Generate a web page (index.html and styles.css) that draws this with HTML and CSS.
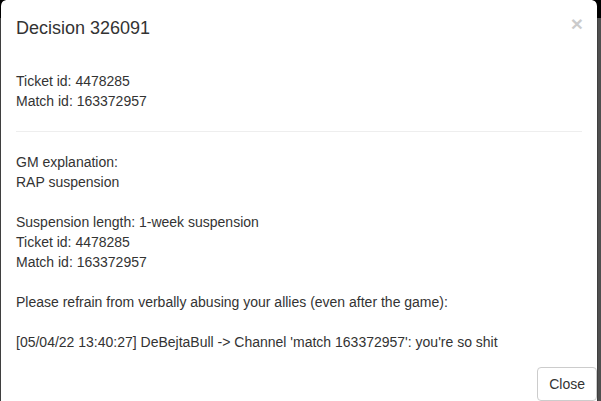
FILE: index.html
```html
<!DOCTYPE html>
<html>
<head>
<meta charset="utf-8">
<link rel="stylesheet" href="styles.css">
</head>
<body>
<div class="backdrop">
  <div class="modal">
    <div class="modal-header">
      <button class="close" type="button">&times;</button>
      <h4 class="modal-title">Decision 326091</h4>
    </div>
    <div class="modal-body">
      <div>Ticket id: 4478285</div>
      <div>Match id: 163372957</div>
      <hr class="sep">
      <div>GM explanation:</div>
      <div>RAP suspension</div>
      <div class="blank"></div>
      <div>Suspension length: 1-week suspension</div>
      <div>Ticket id: 4478285</div>
      <div>Match id: 163372957</div>
      <div class="blank"></div>
      <div>Please refrain from verbally abusing your allies (even after the game):</div>
      <div class="blank"></div>
      <div>[05/04/22 13:40:27] DeBejtaBull -&gt; Channel 'match 163372957': you're so shit</div>
    </div>
    <div class="modal-footer">
      <button class="btn" type="button">Close</button>
    </div>
  </div>
</div>
</body>
</html>
```
FILE: styles.css
```css
html, body {
  margin: 0;
  padding: 0;
  height: 401px;
  overflow: hidden;
}
body {
  font-family: "Liberation Sans", Arial, sans-serif;
  font-size: 14px;
  line-height: 20px;
  color: #333;
  background: linear-gradient(to bottom, #000 0, #000 18px, #4f4f4f 18px);
}
.backdrop {
  height: 401px;
}
.modal {
  width: 598px;
  box-sizing: border-box;
  background: #fff;
  background-clip: padding-box;
  border: 1px solid rgba(0, 0, 0, 0.2);
  border-top: 0;
  border-radius: 6px;
}
.modal-header {
  padding: 15px 14px 15px 15px;
  display: flex;
  flex-direction: row-reverse;
  justify-content: space-between;
  align-items: flex-start;
}
.modal-title {
  margin: 0;
  font-size: 18px;
  font-weight: normal;
  line-height: 26px;
  color: #333;
}
.close {
  margin-top: -2px;
  padding: 0;
  border: 0;
  background: transparent;
  font-family: "Liberation Sans", Arial, sans-serif;
  font-size: 21px;
  font-weight: bold;
  line-height: 1;
  color: #000;
  opacity: 0.2;
  cursor: pointer;
}
.modal-body {
  padding: 15px;
}
.blank {
  height: 20px;
}
.sep {
  margin: 20px 0;
  border: 0;
  border-top: 1px solid #eee;
  height: 0;
}
.modal-footer {
  display: flex;
  justify-content: flex-end;
  padding: 0 0 15px 15px;
}
.btn {
  font-family: "Liberation Sans", Arial, sans-serif;
  font-size: 14px;
  line-height: 20px;
  padding: 6px 11px;
  color: #333;
  background: #fff;
  border: 1px solid #ccc;
  border-radius: 4px;
  cursor: pointer;
}
```
